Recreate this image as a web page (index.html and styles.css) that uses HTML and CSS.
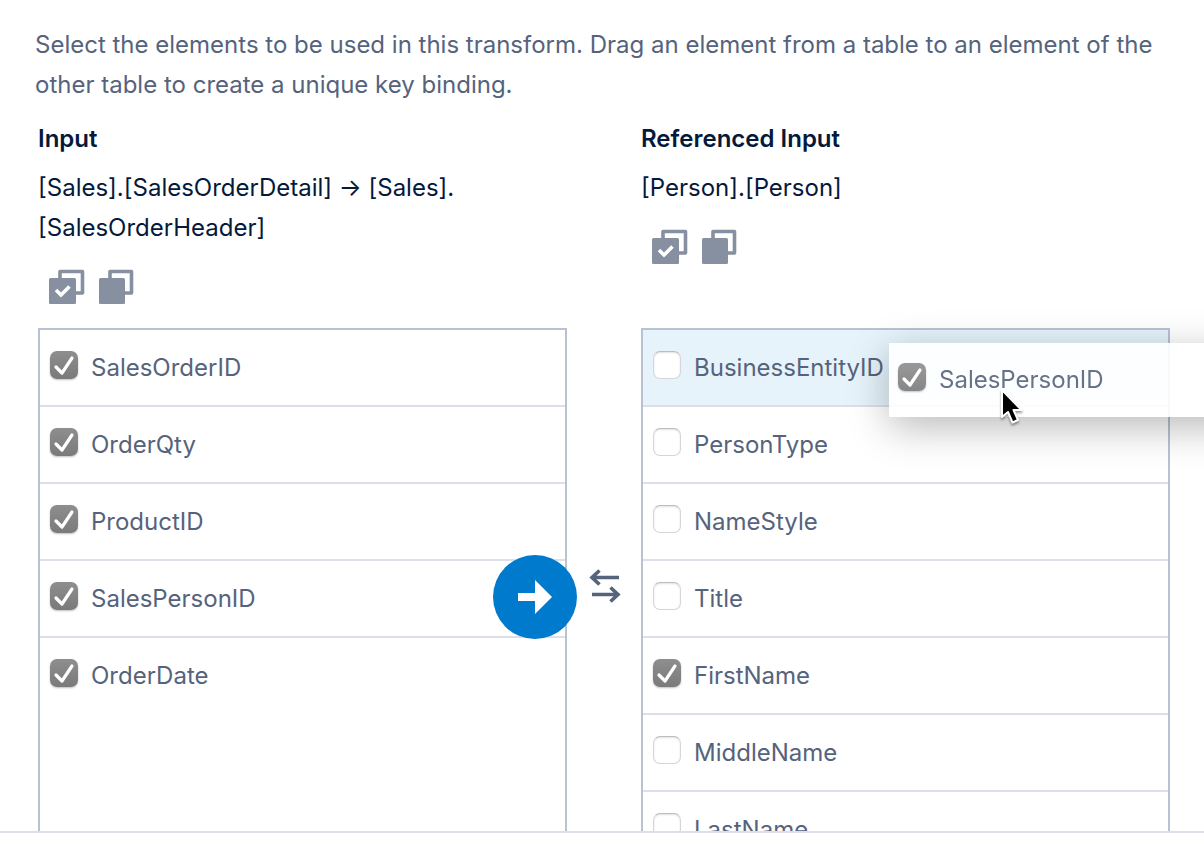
FILE: index.html
```html
<!DOCTYPE html>
<html lang="en">
<head>
  <meta charset="UTF-8" />
  <meta name="viewport" content="width=device-width, initial-scale=1" />
  <title>Transform elements</title>
  <link rel="stylesheet" href="styles.css">
</head>
<body>
  <svg class="sprite" aria-hidden="true">
    <symbol id="icon-all" viewBox="0 0 36 36">
      <path d="M11 10V2.500H33.500V24H27" fill="none" stroke="currentColor" stroke-width="3.600" stroke-linejoin="round" />
      <rect x="0" y="9" width="27" height="26" rx="1.500" fill="currentColor" />
      <path d="M7 21l5 5 8.500-8.500" fill="none" stroke="#fff" stroke-width="3.600" />
    </symbol>
    <symbol id="icon-none" viewBox="0 0 36 36">
      <path d="M11 10V2.500H32.500V24H26" fill="none" stroke="currentColor" stroke-width="3.600" stroke-linejoin="round" />
      <rect x="0" y="9" width="26" height="26" rx="1.500" fill="currentColor" />
    </symbol>
  </svg>
  <main>
    <p class="intro">Select the elements to be used in this transform. Drag an element from a table to an element of the other table to create a unique key binding.</p>
    <div class="binding">
      <section class="source">
        <h2>Input</h2>
        <p>[Sales].[SalesOrderDetail] → [Sales].<wbr>[SalesOrderHeader]</p>
        <div class="tools">
          <button type="button" aria-label="Select all"><svg><use href="#icon-all" /></svg></button>
          <button type="button" aria-label="Select none"><svg><use href="#icon-none" /></svg></button>
        </div>
      </section>
      <section class="source source-ref">
        <h2>Referenced Input</h2>
        <p>[Person].[Person]</p>
        <div class="tools">
          <button type="button" aria-label="Select all"><svg><use href="#icon-all" /></svg></button>
          <button type="button" aria-label="Select none"><svg><use href="#icon-none" /></svg></button>
        </div>
      </section>
      <ul class="list">
        <li><label><input type="checkbox" checked /><span>SalesOrderID</span></label></li>
        <li><label><input type="checkbox" checked /><span>OrderQty</span></label></li>
        <li><label><input type="checkbox" checked /><span>ProductID</span></label></li>
        <li>
          <label><input type="checkbox" checked /><span>SalesPersonID</span></label>
          <button type="button" class="bind-btn" aria-label="Bind element">
            <svg viewBox="0 0 34 34"><path d="M0 13H17V0L34 17 17 34V21H0z" fill="#fff" /></svg>
          </button>
        </li>
        <li><label><input type="checkbox" checked /><span>OrderDate</span></label></li>
      </ul>
      <div class="swap">
        <svg viewBox="0 0 32 36" fill="none" stroke="currentColor" stroke-width="3.600">
          <path d="M30 9.500H3M10.500 2.500L3 9.500l7.500 7M3 26.500H29M21.500 19.500l7.500 7-7.500 7" />
        </svg>
      </div>
      <ul class="list">
        <li class="drop-target"><label><input type="checkbox" /><span>BusinessEntityID</span></label></li>
        <li><label><input type="checkbox" /><span>PersonType</span></label></li>
        <li><label><input type="checkbox" /><span>NameStyle</span></label></li>
        <li><label><input type="checkbox" /><span>Title</span></label></li>
        <li><label><input type="checkbox" checked /><span>FirstName</span></label></li>
        <li><label><input type="checkbox" /><span>MiddleName</span></label></li>
        <li><label><input type="checkbox" /><span>LastName</span></label></li>
      </ul>
    </div>
  </main>
  <footer></footer>

  <div class="dragged">
    <label><input type="checkbox" checked /><span>SalesPersonID</span></label>
    <svg class="cursor" viewBox="0 0 24 38">
      <path d="M2 2V29L8 24 12.500 34.500 18 32 13.500 22H21.500z" fill="#000" stroke="#fff" stroke-width="2" stroke-linejoin="round" />
    </svg>
  </div>
</body>
</html>
```

FILE: styles.css
```css
* {
  box-sizing: border-box;
}
body {
  display: flex;
  flex-direction: column;
  position: relative;
  height: 100vh;
  margin: 0;
  overflow: hidden;
  background: #fff;
  color: #56637c;
  font-family: Inter, sans-serif;
  font-size: 24px;
  line-height: 40px;
}
.sprite {
  display: none;
}
main {
  flex: 1;
  min-height: 0;
  padding: 25px 34px 0 38px;
  overflow: hidden;
}
footer {
  height: 25px;
  border-top: 2px solid #dcdfe9;
}
.intro {
  margin: 0 -34px 14px -3px;
  padding-right: 34px;
}
.binding {
  display: grid;
  grid-template-columns: 1fr 74px 1fr;
}
.source {
  color: #04193c;
}
.source-ref {
  grid-column: 3;
}
.source h2 {
  margin: 0 0 9px;
  font-size: 24px;
  font-weight: 600;
}
.source p {
  margin: 0;
}
.tools {
  display: flex;
  gap: 14px;
  margin-bottom: 23px;
  padding: 21px 11px 0;
}
.tools button {
  width: 36px;
  height: 36px;
  padding: 0;
  border: none;
  background: none;
  color: #8690a1;
  cursor: pointer;
}
.tools svg, .swap svg, .bind-btn svg {
  display: block;
  width: 100%;
  height: 100%;
}

/* element lists */
.list {
  min-height: 504px;
  margin: 0;
  padding: 0;
  border: 2px solid #b7c3d3;
  list-style: none;
}
.list li {
  position: relative;
  height: 77px;
  border-bottom: 2px solid #dcdfe9;
}
.list li:last-child {
  border-bottom: none;
}
.list .drop-target {
  background: #e6f3fb;
}
label {
  display: flex;
  align-items: center;
  gap: 13px;
  height: 75px;
  padding-left: 10px;
}
input {
  appearance: none;
  width: 28px;
  height: 28px;
  margin: 0 0 6px;
  border: 1px solid #d6d6d6;
  border-top-color: #bdbdbd;
  border-radius: 7px;
  background: #fff;
  box-shadow: inset 0 1px 2px rgba(0,0,0,0.12);
}
input:checked {
  border: none;
  background: url("data:image/svg+xml,%3Csvg xmlns='http://www.w3.org/2000/svg' viewBox='0 0 28 28'%3E%3Cpath d='M6 16l6 6L22 7' fill='none' stroke='white' stroke-width='3.200' stroke-linecap='round' stroke-linejoin='round'/%3E%3C/svg%3E"), linear-gradient(#8e8e8e, #7a7a7a);
  box-shadow: 0 1px 2px rgba(0,0,0,0.25);
}
.bind-btn {
  position: absolute;
  top: -6px;
  right: -12px;
  width: 84px;
  height: 84px;
  padding: 25px;
  border: none;
  border-radius: 50%;
  background: #007acc;
  cursor: pointer;
}
.swap {
  padding: 240px 20px 0 22px;
}
.swap svg {
  height: 36px;
}

/* row that follows the pointer */
.dragged {
  position: absolute;
  top: 343px;
  left: 889px;
  width: 528px;
  height: 74px;
  background: rgba(255,255,255,0.9);
  box-shadow: 0 10px 40px rgba(0,0,0,0.28);
}
.dragged label {
  height: 74px;
  padding-left: 9px;
  opacity: 0.9;
}
.cursor {
  position: absolute;
  top: 45px;
  left: 111px;
  width: 24px;
  height: 38px;
  filter: drop-shadow(0 2px 1px rgba(0,0,0,0.4));
}
```
